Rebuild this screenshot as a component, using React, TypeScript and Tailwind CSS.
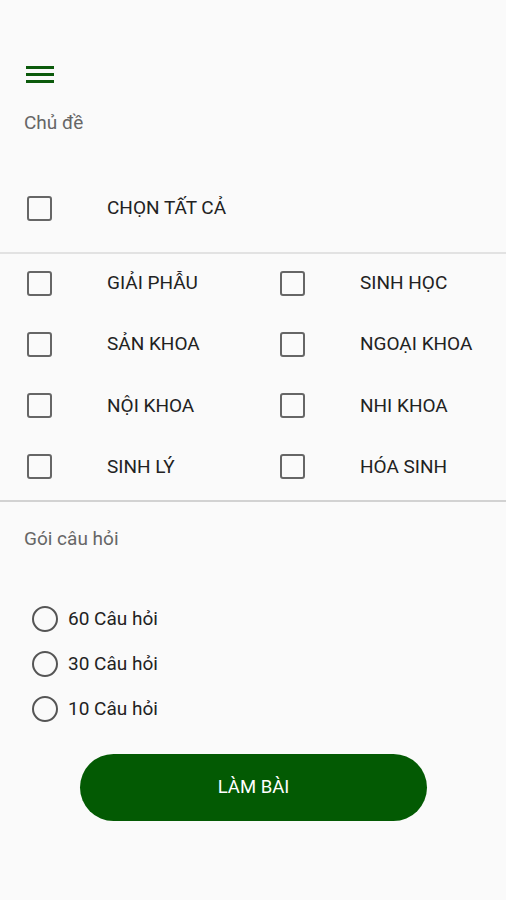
import React from 'react';

const topics = [
  ['GIẢI PHẪU', 'SINH HỌC'],
  ['SẢN KHOA', 'NGOẠI KHOA'],
  ['NỘI KHOA', 'NHI KHOA'],
  ['SINH LÝ', 'HÓA SINH'],
];

const packs = ['60 Câu hỏi', '30 Câu hỏi', '10 Câu hỏi'];

const Box = () => (
  <span className="block w-[25px] h-[25px] shrink-0 rounded-[3px] border-[2.5px] border-[#666666]" />
);

const CheckItem = ({ label }: { label: string }) => (
  <div className="flex items-center h-[56px]">
    <Box />
    <span className="ml-[55px] text-[19px] leading-6 text-[#222222]">{label}</span>
  </div>
);

export default function App() {
  return (
    <div className="min-h-[900px] w-full bg-[#fafafa] font-['Roboto',sans-serif] pt-[66px]">
      <svg className="ml-[26px] block" width="28" height="17" viewBox="0 0 28 17">
        <rect x="0" y="0" width="28" height="3" fill="#0b5a0b" />
        <rect x="0" y="7" width="28" height="3" fill="#0b5a0b" />
        <rect x="0" y="14" width="28" height="3" fill="#0b5a0b" />
      </svg>

      <div className="mt-[28px] pl-[24px] text-[19px] leading-6 text-[#666666]">Chủ đề</div>

      <div className="mt-[45px] pl-[27px]">
        <CheckItem label="CHỌN TẤT CẢ" />
      </div>

      <div className="mt-[16px] h-[2px] bg-[#e2e2e2]" />

      <div className="flex flex-col gap-[5.3px] pt-[1px] pl-[27px]">
        {topics.map(([a, b]) => (
          <div key={a} className="grid grid-cols-[253px_1fr]">
            <CheckItem label={a} />
            <CheckItem label={b} />
          </div>
        ))}
      </div>

      <div className="mt-[5px] h-[2px] bg-[#d2d2d2]" />

      <div className="mt-[25px] pl-[24px] text-[19px] leading-6 text-[#666666]">Gói câu hỏi</div>

      <div className="mt-[46px] pl-[32px] flex flex-col">
        {packs.map((p) => (
          <div key={p} className="flex items-center h-[45px]">
            <span className="block w-[26px] h-[26px] rounded-full border-[2.5px] border-[#555555]" />
            <span className="ml-[10px] text-[19px] leading-6 text-[#222222]">{p}</span>
          </div>
        ))}
      </div>

      <button className="mt-[22px] ml-[80px] flex h-[67px] w-[347px] items-center justify-center rounded-full bg-[#035a03] text-[18.5px] text-white">
        LÀM BÀI
      </button>
    </div>
  );
}
